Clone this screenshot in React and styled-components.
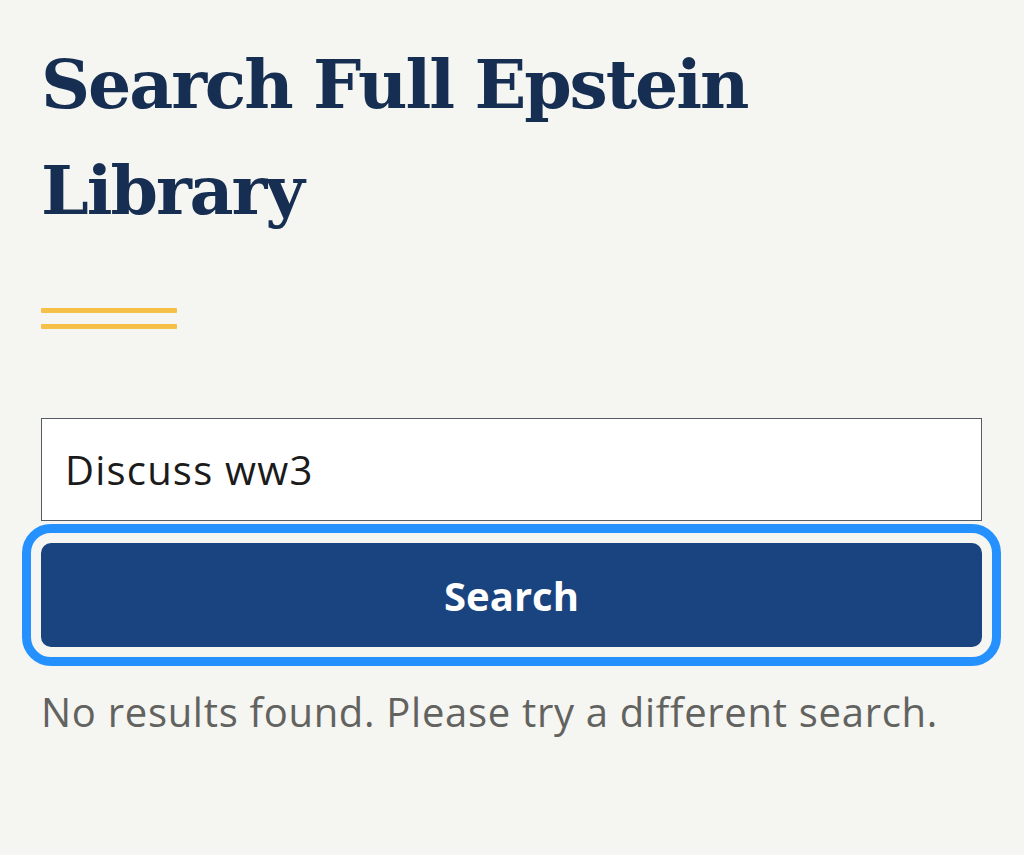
import React from "react";
import styled, { createGlobalStyle } from "styled-components";

const GlobalStyle = createGlobalStyle`
  body {
    margin: 0;
    background: #f5f5f1;
    font-family: "Open Sans", "Liberation Sans", sans-serif;
  }
`;

const Page = styled.main`
  padding: 31px 42px 0 41px;
`;

const Title = styled.h1`
  margin: 0;
  font-family: "DejaVu Serif", "Liberation Serif", serif;
  font-weight: 700;
  font-size: 68px;
  line-height: 106px;
  color: #162e51;
  letter-spacing: -2.1px;
`;

const Rule = styled.div`
  width: 136px;
  margin-top: 65px;
  display: flex;
  flex-direction: column;
  gap: 11px;

  span {
    height: 5px;
    background: #f6bf45;
    border-radius: 1px;
  }
`;

const Form = styled.form`
  margin-top: 89px;
  display: flex;
  flex-direction: column;
  gap: 22px;
`;

const Input = styled.input`
  box-sizing: border-box;
  width: 100%;
  height: 103px;
  padding: 0 23px;
  border: 1.5px solid #565c65;
  border-radius: 0;
  background: #fff;
  font-family: "Open Sans", "Liberation Sans", sans-serif;
  font-size: 40px;
  letter-spacing: 1.2px;
  color: #1b1b1b;
  outline: none;
`;

const Button = styled.button`
  height: 104px;
  border: none;
  border-radius: 10px;
  background: #1a4480;
  color: #fff;
  font-family: "Open Sans", "Liberation Sans", sans-serif;
  font-weight: 700;
  font-size: 40px;
  outline: 9px solid #2491ff;
  outline-offset: 10px;
  cursor: pointer;
`;

const Message = styled.p`
  margin: 38px 0 0;
  font-size: 40px;
  line-height: 1.362;
  letter-spacing: 0.7px;
  color: #62625f;
`;

export default function App() {
  return (
    <>
      <GlobalStyle />
      <Page>
        <Title>Search Full Epstein Library</Title>
        <Rule>
          <span />
          <span />
        </Rule>
        <Form onSubmit={e => e.preventDefault()}>
          <Input type="text" defaultValue="Discuss ww3" />
          <Button type="submit">Search</Button>
        </Form>
        <Message>No results found. Please try a different search.</Message>
      </Page>
    </>
  );
}
